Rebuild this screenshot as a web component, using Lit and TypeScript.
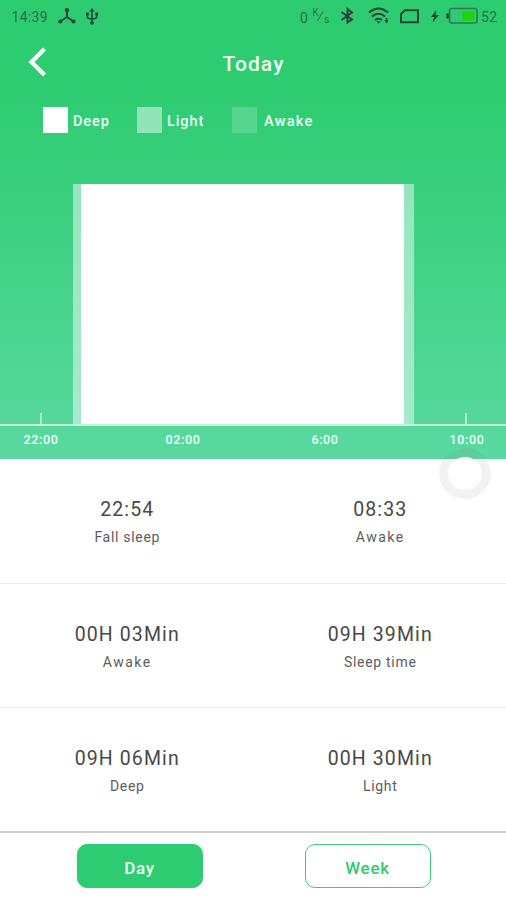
import { LitElement, html, css } from "lit";
import { customElement, property, state } from "lit/decorators.js";
import { classMap } from "lit/directives/class-map.js";

@customElement("status-bar")
class StatusBar extends LitElement {
  static styles = css`
    :host { display: block; height: 33px; }
    svg { display: block; }
    .txt { font: 400 14px Roboto, sans-serif; fill: #287044; }
    .small { font-size: 10px; }
    .line { fill: none; stroke: #274438; stroke-width: 1.6; }
    .thick { stroke-width: 2; }
    .thin { stroke: #2c7a4b; }
    .slash { stroke: #287044; stroke-width: 1; fill: none; }
    .dot { fill: #274438; }
    .charge { fill: #16d60b; }
  `;
  render() {
    return html`
      <svg width="506" height="33" viewBox="0 0 506 33">
        <text class="txt" x="11.500" y="22" textLength="36">14:39</text>
        <path class="line thick" d="M67 10V17L60 21.500M67 17L73.500 21.500" />
        <circle class="dot" cx="67" cy="10.200" r="2.100" />
        <circle class="dot" cx="60.300" cy="21.500" r="2.100" />
        <circle class="dot" cx="73.500" cy="21.500" r="2.100" />
        <path class="line" d="M92 10V23M87.300 13.500V16.500Q87.300 19 92 19Q96.700 19 96.700 16.500V13.500" />
        <path class="dot" d="M89.500 11.500L92 8L94.500 11.500ZM86 12.500h2.800v3H86ZM95.300 12.500h2.800v3h-2.800Z" />
        <circle class="dot" cx="92" cy="22.800" r="1.900" />

        <text class="txt" x="300" y="22.500">0</text>
        <text class="txt small" x="312.500" y="16">K</text>
        <path class="slash" d="M323 11.500L317.500 21" />
        <text class="txt small" x="324" y="22.500">s</text>
        <path class="line thick" d="M341.500 12L352 19.500L347.500 22.500V9L352 12.500L341.500 20" />
        <path class="line thick" d="M369 12.500Q378.500 4.500 388 12.500M372 16.500Q378.500 11 385 16.500M375 20Q378.500 17.500 382 20" />
        <path class="dot" d="M376.500 21.300h4L378.500 23.800ZM384.500 20h1.200v-2h1.600v2h1.200l-2 3.500Z" />
        <path class="line thick" d="M405 10.200H418V22.300H401V14Z" />
        <path class="dot" d="M436.500 10L431 17H434.200L432.500 22.500L439 15H435.500Z" />
        <rect class="line thin" x="449.500" y="8.500" width="27.500" height="14.500" rx="2" />
        <path class="dot" d="M446.300 13.500h2.500v5h-2.500Z" />
        <rect class="charge" x="462.500" y="11.500" width="12" height="9" />
        <text class="txt" x="481" y="22" textLength="16">52</text>
      </svg>
    `;
  }
}

@customElement("sleep-chart")
class SleepChart extends LitElement {
  static styles = css`
    :host { display: block; }
    .plot {
      display: flex;
      height: 240px;
      padding: 0 92px 0 72.500px;
      border-bottom: 2px solid #c4f2da;
      position: relative;
    }
    .light { background: rgba(255, 255, 255, 0.47); width: 8.500px; }
    .light.end { width: 10px; }
    .deep { background: #fff; flex: 1; }
    .tick {
      position: absolute;
      bottom: 0;
      width: 2px;
      height: 11px;
      background: rgba(255, 255, 255, 0.5);
    }
    .tick.first { left: 40px; }
    .tick.last { left: 465px; }
    .labels {
      display: flex;
      justify-content: space-between;
      padding: 0 19px 0 21px;
      height: 33px;
    }
    .labels span {
      width: 40px;
      text-align: center;
      white-space: nowrap;
      font: 500 12.500px/27px Roboto, sans-serif;
      letter-spacing: 0.650px;
      color: #f3fff8;
    }
  `;
  @state() private hours = ["22:00", "02:00", "6:00", "10:00"];
  render() {
    return html`
      <div class="plot">
        <div class="light"></div>
        <div class="deep"></div>
        <div class="light end"></div>
        <i class="tick first"></i>
        <i class="tick last"></i>
      </div>
      <div class="labels">${this.hours.map((h) => html`<span>${h}</span>`)}</div>
    `;
  }
}

@customElement("sleep-stat")
class SleepStat extends LitElement {
  static styles = css`
    :host { display: flex; flex-direction: column; align-items: center; padding-top: 38px; }
    .value { font: 400 19.500px/26px Roboto, sans-serif; letter-spacing: 1.100px; color: #484848; padding-left: 1px; }
    .label { font: 400 14px/20px Roboto, sans-serif; letter-spacing: 0.700px; color: #5c5c5c; margin-top: 4px; padding-left: 1px; }
    .wide { letter-spacing: 1.500px; }
  `;
  @property() value = "";
  @property() label = "";
  render() {
    const wide = this.label === "Awake";
    return html`
      <div class="value">${this.value}</div>
      <div class=${classMap({ label: true, wide })}>${this.label}</div>
    `;
  }
}

@customElement("app-root")
class AppRoot extends LitElement {
  static styles = css`
    :host {
      display: flex;
      flex-direction: column;
      width: 506px;
      height: 900px;
      overflow: hidden;
      position: relative;
      background: #fff;
      font-family: Roboto, sans-serif;
    }
    .hero {
      height: 459px;
      background: linear-gradient(#2ecc71 0, #2ecc71 90px, #5ad9a1 459px);
    }
    .bar {
      display: grid;
      grid-template-columns: 76px 1fr 76px;
      align-items: center;
      height: 60px;
    }
    .back { display: block; margin-left: 26px; }
    .back path { fill: none; stroke: #fff; stroke-width: 4.200; }
    .title {
      text-align: center;
      font-size: 21px;
      font-weight: 500;
      line-height: 28px;
      letter-spacing: 1.100px;
      color: #effff5;
      padding: 2px 0 0 1px;
    }
    .legend { display: flex; padding: 14px 0 0 43px; height: 91px; box-sizing: border-box; }
    .item { display: flex; height: 26px; align-items: center; }
    .item.deep { width: 94px; gap: 5px; }
    .item.light { width: 95px; gap: 5px; }
    .item.awake { gap: 7px; }
    .swatch { width: 25px; height: 26px; }
    .deep .swatch { background: #fff; }
    .light .swatch { background: rgba(255, 255, 255, 0.47); }
    .awake .swatch { background: rgba(255, 255, 255, 0.18); }
    .name { font-size: 14.500px; font-weight: 500; letter-spacing: 0.900px; color: #effff5; padding-top: 2px; }
    .awake .name { letter-spacing: 1.300px; }
    .row { display: grid; grid-template-columns: 253.500px 252.500px; height: 124.670px; box-sizing: border-box; border-bottom: 1.500px solid #ececec; }
    .row.final { border-bottom: 2px solid #cfcfcf; }
    .tabs { display: flex; padding: 11px 0 0 76.500px; gap: 102px; }
    .tab {
      width: 126px;
      height: 44px;
      box-sizing: border-box;
      border: 1.500px solid #3fca78;
      border-radius: 10px;
      background: #fff;
      color: #2ecc71;
      font: 500 17px/44px Roboto, sans-serif;
      letter-spacing: 0.700px;
      padding: 1px 0 0;
    }
    .tab.active { background: #2ecc71; color: #effff5; border-color: #2ecc71; }
    .assist {
      position: absolute;
      left: 439px;
      top: 448px;
      width: 52px;
      height: 51px;
      box-sizing: border-box;
      border: 9px solid rgba(110, 110, 110, 0.09);
      border-radius: 50%;
      background: #fff padding-box;
    }
  `;
  @state() private tab = "Day";
  private legend = ["Deep", "Light", "Awake"];
  private rows = [
    [["22:54", "Fall sleep"], ["08:33", "Awake"]],
    [["00H 03Min", "Awake"], ["09H 39Min", "Sleep time"]],
    [["09H 06Min", "Deep"], ["00H 30Min", "Light"]],
  ];
  render() {
    return html`
      <div class="hero">
        <status-bar></status-bar>
        <div class="bar">
          <svg class="back" width="24" height="34" viewBox="0 0 24 34"><path d="M18.500 3L5.500 16L18.500 29" /></svg>
          <div class="title">Today</div>
        </div>
        <div class="legend">
          ${this.legend.map((n) => html`
            <div class="item ${n.toLowerCase()}"><i class="swatch"></i><span class="name">${n}</span></div>`)}
        </div>
        <sleep-chart></sleep-chart>
      </div>
      ${this.rows.map((r, i) => html`
        <div class=${classMap({ row: true, final: i === 2 })}>
          ${r.map(([v, l]) => html`<sleep-stat .value=${v} .label=${l}></sleep-stat>`)}
        </div>`)}
      <div class="tabs">
        ${["Day", "Week"].map((t) => html`
          <button class=${classMap({ tab: true, active: this.tab === t })} @click=${() => (this.tab = t)}>${t}</button>`)}
      </div>
      <div class="assist"></div>
    `;
  }
}
